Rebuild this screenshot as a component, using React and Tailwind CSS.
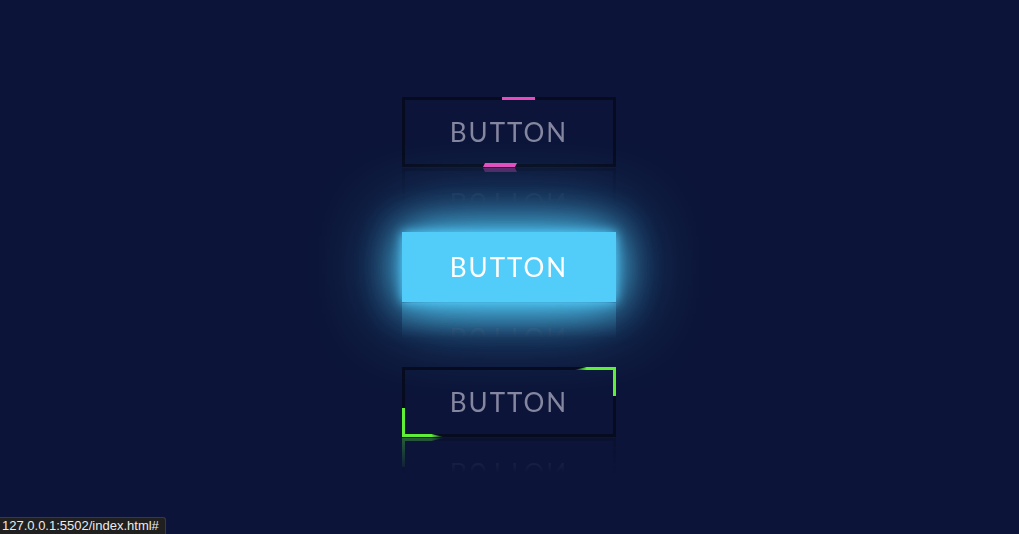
import React from "react";

const font = { fontFamily: "Lato, 'Noto Sans', sans-serif" };

const reflect =
  "[-webkit-box-reflect:below_1px_linear-gradient(transparent,transparent,#0005)]";

const btn =
  "relative w-[214px] h-[70px] flex items-center justify-center text-[26px] tracking-[2px] " +
  reflect;

const App = () => {
  return (
    <div
      className="relative w-full h-[534px] bg-[#0c1539] flex flex-col items-center justify-center gap-[65px]"
      style={font}
    >
      {/* top: pink sliding bars */}
      <a
        href="#"
        className={`${btn} border-[3px] border-[#070b1f] text-[#85869f] mr-[1px]`}
      >
        <span className="absolute -top-[3px] left-[97px] w-[33px] h-[3px] bg-[#e94bbd]" />
        <span className="absolute -bottom-[3px] left-[78px] w-[34px] h-[4px] bg-[#e94bbd] [clip-path:polygon(2px_0,100%_0,calc(100%-2px)_100%,0_100%)]" />
        BUTTON
      </a>

      {/* middle: glowing */}
      <a
        href="#"
        className={`${btn} bg-[#52cdfa] text-white mr-[1px] shadow-[0_0_10px_#52cdfa,0_0_40px_#52cdfa,0_0_80px_#52cdfa]`}
      >
        BUTTON
      </a>

      {/* bottom: green corners */}
      <a
        href="#"
        className={`${btn} border-[3px] border-[#070b1f] text-[#85869f] mr-[1px]`}
      >
        <span className="absolute -top-[3px] right-[-3px] w-[42px] h-[3px] bg-gradient-to-r from-transparent via-[#5ef036] via-30% to-[#5ef036] [clip-path:polygon(0_100%,30%_0,100%_0,100%_100%)]" />
        <span className="absolute -top-[3px] right-[-3px] w-[3px] h-[29px] bg-[#5ef036]" />
        <span className="absolute -bottom-[3px] left-[-3px] w-[42px] h-[3px] bg-gradient-to-l from-transparent via-[#5ef036] via-30% to-[#5ef036] [clip-path:polygon(0_0,70%_0,100%_100%,0_100%)]" />
        <span className="absolute -bottom-[3px] left-[-3px] w-[3px] h-[29px] bg-[#5ef036]" />
        BUTTON
      </a>

      <div
        className="absolute left-0 bottom-0 h-[17px] pl-[2px] pr-[6px] bg-[#202020] border-t border-r border-[#3a3a3a] rounded-tr-[3px] text-[13px] leading-[16px] text-[#ececec]"
        style={{ fontFamily: "'Liberation Sans', Arial, sans-serif" }}
      >
        127.0.0.1:5502/index.html#
      </div>
    </div>
  );
};

export default App;
